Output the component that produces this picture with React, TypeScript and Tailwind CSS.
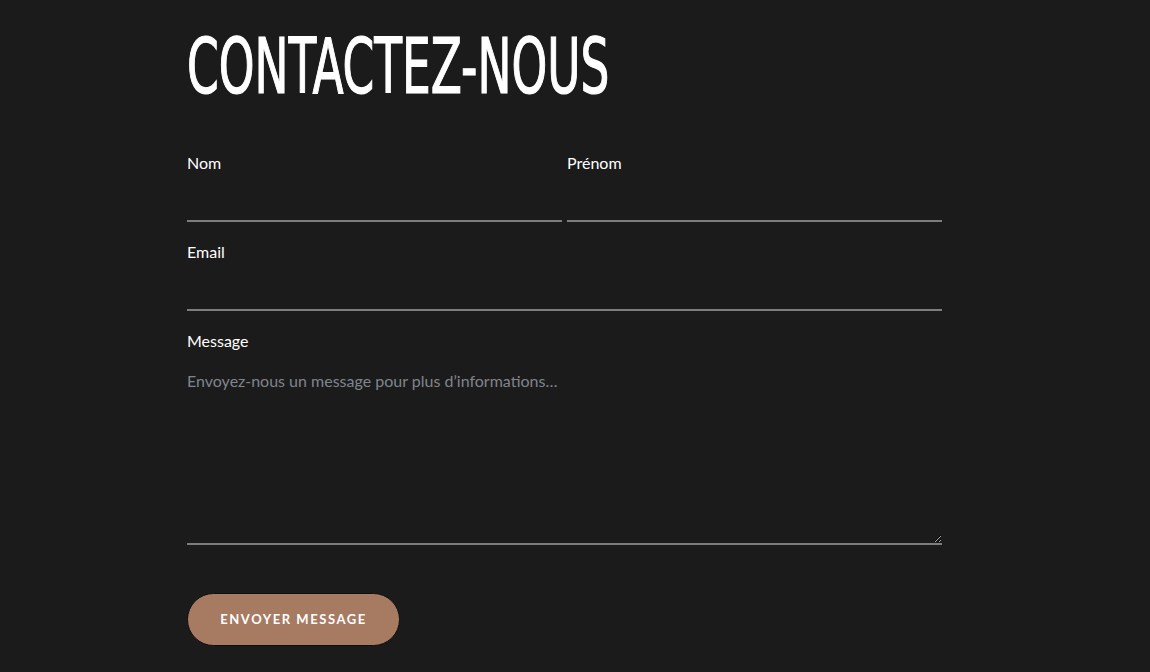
import React from 'react';

const Field = ({ label, className = '' }: { label: string; className?: string }) => (
  <div className={className}>
    <label className="block text-base leading-[22px] text-white">{label}</label>
    <input
      type="text"
      className="block h-[48px] w-full border-b-2 border-[#7d7d7d] bg-transparent text-white outline-none"
    />
  </div>
);

const App = () => {
  return (
    <section
      className="min-h-[672px] w-full bg-[#1b1b1b] pt-[27px]"
      style={{ fontFamily: 'Lato, "Noto Sans", sans-serif' }}
    >
      <div className="ml-[187px] w-[755px]">
        <h1
          className="inline-block origin-left scale-x-[0.665] whitespace-nowrap text-[76px] font-normal leading-[80px] text-white uppercase [-webkit-text-stroke:1.2px_white]"
          style={{ fontFamily: '"DejaVu Sans Condensed", "DejaVu Sans", sans-serif' }}
        >
          Contactez-nous
        </h1>
        <form className="mt-[45px]">
          <div className="grid grid-cols-2 gap-x-[5px]">
            <Field label="Nom" />
            <Field label="Prénom" />
          </div>
          <Field label="Email" className="mt-[19px]" />
          <div className="mt-[19px]">
            <label className="block text-base leading-[22px] text-white">Message</label>
            <textarea
              placeholder="Envoyez-nous un message pour plus d’informations…"
              className="block h-[193px] w-full border-b-2 border-[#7d7d7d] bg-transparent pt-[17px] text-base leading-6 text-white outline-none placeholder:text-[#80858d]"
            />
          </div>
          <button
            type="submit"
            className="mt-[48px] h-[53px] w-[213px] rounded-full border border-[#0f0f0f] bg-[#a77a62] text-[13px] font-bold tracking-[0.12em] text-white uppercase"
          >
            Envoyer message
          </button>
        </form>
      </div>
    </section>
  );
};

export default App;
